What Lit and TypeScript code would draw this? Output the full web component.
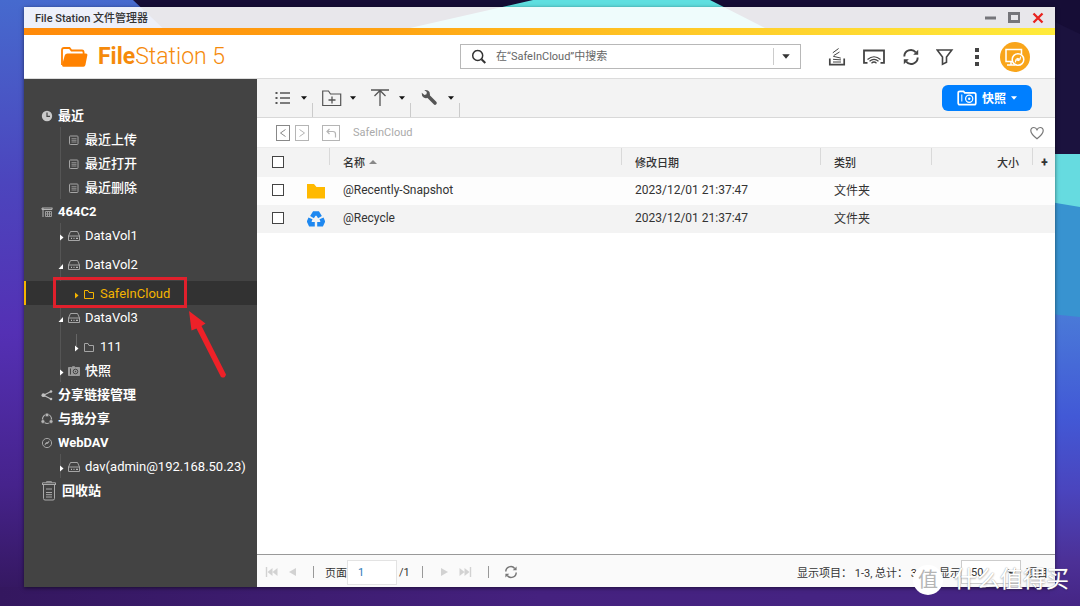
import { LitElement, html, svg, css } from "lit";
import { customElement, state } from "lit/decorators.js";
import { classMap } from "lit/directives/class-map.js";

const icon = (w: number, h: number, body: unknown) =>
  html`<svg class="ico" width=${w} height=${h} viewBox="0 0 ${w} ${h}" fill="none" stroke="currentColor" aria-hidden="true">${body}</svg>`;

const icons = {
  clock: () => icon(12, 12, svg`<circle cx="6" cy="6" r="5.2" fill="#c9c9c9" stroke="none"/><path d="M6 2.5V6.3H9" stroke="#434343" stroke-width="1.2"/>`),
  note: () => icon(12, 12, svg`<rect x="1.500" y="2" width="8.500" height="8.500" rx=".8" stroke="#a5a5a5"/><path d="M3.500 4.700h5M3.500 6.300h5M3.500 8h5" stroke="#a5a5a5" stroke-width=".8"/>`),
  nas: () => icon(12, 12, svg`<path d="M1 2h10.500M2 2v9M1 2v1.500h10V2" stroke="#b5b5b5"/><path d="M4.500 5.500h6v5h-6zM6.500 5.500v5M8.500 5.500v5M4.500 8h6" stroke="#9c9c9c"/>`),
  disk: () => icon(12, 12, svg`<path d="M.5 6L2.500 1.500h7l2 4.500v4.500H.5zM.5 6h11" stroke="#a5a5a5"/><path d="M3 8.300h1M5.500 8.300h1M8 8.300h2" stroke="#d5d5d5"/>`),
  folder: () => icon(12, 12, svg`<path d="M1.500 10.500v-8h3.500l1 2h4.500v6z" stroke="currentColor"/>`),
  camera: () => icon(12, 12, svg`<path d="M.5 2.500h3l1-.8h2l1 .8h4v8H.5z" fill="#9a9a9a" stroke="#9a9a9a"/><path d="M2.500 3.500v6" stroke="#444"/><circle cx="7.500" cy="6.500" r="2.300" stroke="#444"/><circle cx="7.500" cy="6.500" r=".7" fill="#444" stroke="none"/>`),
  share: () => icon(12, 12, svg`<path d="M10 2.500L2.500 6.200 10 10" stroke="#c0c0c0" stroke-width="1.100"/><g fill="#c0c0c0" stroke="none"><circle cx="10" cy="2.500" r="1.300"/><circle cx="2.400" cy="6.200" r="1.900"/><circle cx="10" cy="10" r="1.300"/></g>`),
  shared: () => icon(12, 12, svg`<circle cx="6" cy="6" r="4.500" stroke="#b5b5b5" stroke-width="1.200"/><g fill="#b5b5b5" stroke="#434343" stroke-width=".6"><circle cx="6" cy="1.900" r="1.900"/><circle cx="1.900" cy="8.500" r="1.900"/><circle cx="10.100" cy="8.500" r="1.900"/></g>`),
  dav: () => icon(12, 12, svg`<circle cx="6" cy="6" r="4.600" stroke="#a5a5a5"/><path d="M4 8.200l.6-2 1.400-.8M8 3.800l-.6 2-1.400.8M5 7l2-2" stroke="#a5a5a5"/>`),
  trash: () => icon(16, 20, svg`<path d="M1 3.500h14M1.500 3V1.800h13V3M5.500 1.500V.7h5v.8M2.500 4v13.500q0 1.500 1.500 1.500h8q1.500 0 1.500-1.500V4M5 8h6M5 11.500h6M5 13.700h6M5 16h6" stroke="#a9a9a9"/>`),
  logo: () => icon(28, 22, svg`<path d="M2 19V4q0-2 2-2h5.500l2 2.500H22q1.600 0 1.600 2V8" stroke="#ff8200" stroke-width="1.800"/><path d="M7.500 7.500H26q1.600 0 1.400 1.500l-2 10q-.3 1.700-2 1.700H3.500q-1.800 0-1.400-1.800l2.600-9.500q.6-1.900 2.800-1.900z" fill="#ff8200" stroke="none"/>`),
  search: () => icon(16, 16, svg`<circle cx="6.700" cy="6.500" r="5" stroke-width="1.500"/><path d="M10.500 10.300l3.800 3.700" stroke-width="2"/>`),
  tasks: () => icon(18, 20, svg`<path d="M1.800 11.500v6.200h14.400v-6.200" stroke-width="1.700"/><path d="M5 15h8M5 12.300l8 .6M5.200 9.300l7.600 1.800M5.800 8.500L11.500 5M4.800 5.800L10.600 1.500" stroke-width="1"/>`),
  cast: () => icon(24, 20, svg`<path d="M5.500 15.800H2V3.500h20v12.300h-3.500" stroke-width="1.800"/><path d="M5.500 12.500q6.500-5.500 13 0M7.500 14.300q4.500-4 9 0M9.500 16.200q2.500-2.400 5 0" stroke-width="1.200"/>`),
  refresh: () => icon(18, 18, svg`<path d="M2.300 8.500A6.500 6.500 0 0 1 13.800 4.400M15.700 9.500A6.500 6.500 0 0 1 4.200 13.600" stroke-width="1.900"/><path d="M16.200 1.800v5h-5zM1.800 16.200v-5h5z" fill="currentColor" stroke="none"/>`),
  filter: () => icon(18, 18, svg`<path d="M1.200 2h14.600L10.500 9v5.200L6.500 16.200V9z" stroke-width="1.600"/>`),
  more: () => icon(6, 20, svg`<path d="M1 1h4v4H1zM1 8h4v4H1zM1 15h4v4H1z" fill="currentColor" stroke="none"/>`),
  remote: () => icon(30, 30, svg`<circle cx="15" cy="15" r="15" fill="#f9a51a" stroke="none"/><path d="M13 19.500H6V7.500h15.500v5M7 23h8M11 20v3" stroke="#fff" stroke-width="1.500"/><circle cx="18" cy="17.500" r="5.800" fill="#f9a51a" stroke="#fff" stroke-width="1.500"/><path d="M15.300 20.300l.8-3 2-1M20.700 14.700l-.8 3-2 1M16.800 18.700l2.400-2.400" stroke="#fff" stroke-width="1.200"/>`),
  list: () => icon(20, 20, svg`<path d="M7 5h10M7 10h10M7 15h10" stroke-width="1.600"/><path d="M2.500 5h2M2.500 10h2M2.500 15h2" stroke-width="2"/>`),
  newFolder: () => icon(20, 20, svg`<path d="M.700 17.500V3H6.500l2 3H18.700v11.500z" stroke-width="1.200"/><path d="M10 8.500v7M6.500 12h7" stroke-width="1.300"/>`),
  upload: () => icon(20, 20, svg`<path d="M0 2h18M9 2.500v15.500M3.500 8L9 2.500 14.500 8" stroke-width="1.300"/>`),
  wrench: () => icon(20, 20, svg`<path d="M8.500 8.500l6.500 6.500" stroke-width="3.600" stroke-linecap="round"/><path d="M1.700 4.800L4.500 7l2-.8.300-2.200L4.300 2Q8 1.400 9.500 4q1.300 2.800-.8 5-2.300 2-5 .6Q1.500 8.200 1.700 4.800z" fill="currentColor" stroke="none"/>`),
  snapshot: () => icon(20, 16, svg`<path d="M1.200 13V3q0-1.700 1.700-1.700h3.600l1.200 1.500h9.400q1.700 0 1.700 1.700V13q0 1.700-1.700 1.700H2.900Q1.200 14.700 1.200 13z" stroke="#fff" stroke-width="1.700"/><path d="M4.800 4.500v7" stroke="#fff"/><circle cx="12.200" cy="8.700" r="3.600" stroke="#fff" stroke-width="1.200"/><circle cx="12.200" cy="8.700" r="1.200" fill="#fff" stroke="none"/>`),
  heart: () => icon(14, 14, svg`<path d="M7 12.700Q.8 7.900.8 4.700.8 1.500 3.900 1.500 6 1.500 7 3.700 8 1.500 10.100 1.500q3.100 0 3.100 3.200 0 3.200-6.200 8z" stroke-width="1.200"/>`),
  left: () => icon(14, 16, svg`<rect x=".5" y=".5" width="13" height="15"/><path d="M9.500 4.500L4.500 8l5 3.500"/>`),
  right: () => icon(14, 16, svg`<rect x=".5" y=".5" width="13" height="15"/><path d="M4.500 4.500L9.500 8l-5 3.500"/>`),
  up: () => icon(18, 16, svg`<rect x=".5" y=".5" width="17" height="15"/><path d="M13.500 12.500V9q0-2.500-2.500-2.500H5M7.500 4L5 6.500 7.500 9" stroke-width="1.200"/>`),
  folderFull: () => icon(18, 16, svg`<path d="M0 1h7l2.500 3H18v11.500H0z" fill="#ffb900" stroke="none"/>`),
  recycle: () => icon(18, 16, svg`<g stroke="#1e88f0" stroke-width="4.400"><path d="M5 6.200L7.300 2.500h3.400L13 6.200"/><path d="M14.500 7.300l1.300 3.200-1.300 2.800H10.200"/><path d="M7.800 13.300H3.500L2.200 10.500l1.300-3.200"/></g>`),
  caret: () => icon(6, 4, svg`<path d="M0 .2h6L3 3.800z" fill="currentColor" stroke="none"/>`),
  sort: () => icon(8, 4, svg`<path d="M0 4h8L4 0z" fill="#888" stroke="none"/>`),
  closed: () => icon(6, 12, svg`<path d="M2 4.500v6L5.500 7.500z" fill="currentColor" stroke="none"/>`),
  open: () => icon(6, 12, svg`<path d="M5 5v5H.5z" fill="currentColor" stroke="none"/>`),
  first: () => icon(14, 10, svg`<path d="M1.500 0v10" stroke-width="1.400"/><path d="M7.500 1v8L2.500 5zM12.500 1v8L7.500 5z" fill="currentColor" stroke="none"/>`),
  prev: () => icon(8, 10, svg`<path d="M7 1v8L0 5z" fill="currentColor" stroke="none"/>`),
  next: () => icon(8, 10, svg`<path d="M0 1v8l7-4z" fill="currentColor" stroke="none"/>`),
  last: () => icon(14, 10, svg`<path d="M11.500 0v10" stroke-width="1.400"/><path d="M5.500 1v8l5-4zM.5 1v8l5-4z" fill="currentColor" stroke="none"/>`),
  min: () => icon(12, 12, svg`<path d="M1 6h11" stroke="#75757a" stroke-width="3"/>`),
  max: () => icon(12, 12, svg`<rect x="1.500" y="1.500" width="10" height="8" stroke="#75757a" stroke-width="3"/>`),
  close: () => icon(12, 12, svg`<path d="M1.500 1.500l9 9M10.500 1.500l-9 9" stroke="#e8231f" stroke-width="2.300"/>`),
};
type IconName = keyof typeof icons;

interface TreeNode {
  label: string;
  icon: IconName;
  branch?: "open" | "closed";
  volume?: boolean;
  selected?: boolean;
  children?: TreeNode[];
}

const TREE: TreeNode[] = [
  { label: "最近", icon: "clock", children: [
    { label: "最近上传", icon: "note" },
    { label: "最近打开", icon: "note" },
    { label: "最近删除", icon: "note" },
  ] },
  { label: "464C2", icon: "nas", children: [
    { label: "DataVol1", icon: "disk", branch: "closed", volume: true },
    { label: "DataVol2", icon: "disk", branch: "open", volume: true, children: [
      { label: "SafeInCloud", icon: "folder", branch: "closed", selected: true },
    ] },
    { label: "DataVol3", icon: "disk", branch: "open", volume: true, children: [
      { label: "111", icon: "folder", branch: "closed" },
    ] },
    { label: "快照", icon: "camera", branch: "closed" },
  ] },
  { label: "分享链接管理", icon: "share" },
  { label: "与我分享", icon: "shared" },
  { label: "WebDAV", icon: "dav", children: [
    { label: "dav(admin@192.168.50.23)", icon: "disk", branch: "closed" },
  ] },
  { label: "回收站", icon: "trash" },
];

const FILES: { name: string; date: string; type: string; icon: IconName }[] = [
  { name: "@Recently-Snapshot", date: "2023/12/01 21:37:47", type: "文件夹", icon: "folderFull" },
  { name: "@Recycle", date: "2023/12/01 21:37:47", type: "文件夹", icon: "recycle" },
];

const reset = css`
  * { box-sizing: border-box; }
  button, input, select { font: inherit; color: inherit; margin: 0; padding: 0; border: 0; background: none; border-radius: 0; }
  button { display: inline-flex; align-items: center; }
  a { color: inherit; text-decoration: none; }
  .ico { display: block; flex: none; }
`;

@customElement("folder-tree")
class FolderTree extends LitElement {
  static styles = [reset, css`
    :host { display: block; width: 233px; flex: none; padding-top: 24px; background: #434343; color: #fff; font-size: 13px; }
    ul { list-style: none; margin: 0; padding: 0; }
    .branch { background: linear-gradient(#555, #555) 36px 0 / 1px 100% no-repeat; }
    .branch .branch { background-image: linear-gradient(#666, #666); background-position: 52px 0; background-size: 1px 12px; }
    .row { display: flex; align-items: center; height: 24px; position: relative; }
    .row.volume { margin-bottom: 5px; }
    .row.selected { background: #323232; color: #f5b400; box-shadow: inset 2px 0 #f5b400; }
    .d0 { padding-left: 17px; font-weight: 700; }
    .d1 { padding-left: 34px; }
    .d2 { padding-left: 49px; }
    .toggle { width: 6px; margin-right: 4px; padding-top: 2px; flex: none; }
    .link { display: flex; align-items: center; gap: 5px; white-space: nowrap; }
    .link .ico { margin-top: 2px; }
    .han { padding-bottom: 2px; }
    .d1 .han { font-weight: 500; }
    .d2:not(.selected) .link .ico { color: #a5a5a5; }
    .mark { position: absolute; left: 29px; top: -4px; width: 134px; height: 31px; border: 3px solid #e0202c; }
    .pointer { position: absolute; left: 160px; top: 26px; }
  `];

  private row(node: TreeNode, depth: number): unknown {
    const han = /[\u4e00-\u9fff]/.test(node.label);
    return html`<li>
      <div class=${classMap({ row: true, [`d${depth}`]: true, selected: !!node.selected, volume: !!node.volume })}>
        ${depth > 0 ? (node.branch
          ? html`<button class="toggle" aria-label=${node.label}>${icons[node.branch]()}</button>`
          : html`<span class="toggle"></span>`) : null}
        <a class="link" href="#">${icons[node.icon]()}<span class=${classMap({ han })}>${node.label}</span></a>
        ${node.selected ? html`<span class="mark"></span>
          <svg class="pointer" width="46" height="72" viewBox="0 0 46 72" aria-hidden="true">
            <path d="M5 4L21.500 16.500 17.500 19 42 67.500Q41 72 37 70L12.500 21.500 7.500 23.500z" fill="#ee2128"/>
          </svg>` : null}
      </div>
      ${node.children ? html`<ul class="branch">${node.children.map((c) => this.row(c, depth + 1))}</ul>` : null}
    </li>`;
  }

  render() {
    return html`<nav><ul>${TREE.map((n) => this.row(n, 0))}</ul></nav>`;
  }
}

@customElement("file-list")
class FileList extends LitElement {
  static styles = [reset, css`
    :host { display: block; flex: 1; }
    table { width: 100%; table-layout: fixed; border-collapse: collapse; font-size: 12px; }
    th, td { padding: 0 0 2px 14px; text-align: left; font-weight: 400; white-space: nowrap; }
    th { height: 29px; padding-bottom: 0; font-size: 11px; font-weight: 500; background: linear-gradient(#d9d9d9, #d9d9d9) 0 0 / 1px 17px no-repeat; }
    td { height: 28px; }
    thead { background: #f3f3f3; border-top: 1px solid #ececec; }
    tbody tr { background: #fdfdfd; }
    tbody tr:nth-child(even) { background: #f3f3f3; }
    .check { width: 50px; background: none; padding-left: 15px; }
    .kind { width: 22px; background: none; padding: 0; }
    .date { width: 199px; }
    .type { width: 111px; }
    .size { width: 101px; text-align: right; padding: 0 13px 0 0; }
    .add { width: 23px; padding: 0; }
    .add button { width: 100%; justify-content: center; font-size: 12px; font-weight: 900; padding-left: 2px; }
    .name button { gap: 4px; }
    .box { appearance: none; display: block; width: 12px; height: 12px; border: 1px solid #444; background: #fff; }
    .box:checked { background: #0a7cff; }
  `];

  render() {
    return html`<table>
      <thead><tr>
        <th class="check"><input class="box" type="checkbox" aria-label="全选"></th>
        <th class="kind"></th>
        <th class="name"><button>名称 ${icons.sort()}</button></th>
        <th class="date">修改日期</th>
        <th class="type">类别</th>
        <th class="size">大小</th>
        <th class="add"><button>+</button></th>
      </tr></thead>
      <tbody>${FILES.map((f) => html`<tr>
        <td class="check"><input class="box" type="checkbox" aria-label=${f.name}></td>
        <td class="kind">${icons[f.icon]()}</td>
        <td><a href="#">${f.name}</a></td>
        <td>${f.date}</td>
        <td>${f.type}</td>
        <td></td>
        <td></td>
      </tr>`)}</tbody>
    </table>`;
  }
}

@customElement("app-root")
class AppRoot extends LitElement {
  static styles = [reset, css`
    :host { display: flex; position: relative; min-height: 100vh; box-sizing: border-box; padding: 7px 25px 19px 24px; overflow: hidden; font-family: Roboto, "Noto Sans CJK SC", sans-serif; font-size: 11px; color: #333; }
    .desktop { position: absolute; inset: 0; width: 100%; height: 100%; }
    .window { position: relative; flex: 1; min-width: 0; display: flex; flex-direction: column; box-shadow: 0 1px 4px rgba(0, 0, 0, .55); }
    .title { display: flex; align-items: center; height: 21px; padding: 0 11px; background: rgba(255, 255, 255, .9); }
    .title h1 { flex: 1; margin: 0; padding-bottom: 2px; font-size: 11px; font-weight: 500; }
    .controls { display: flex; gap: 12px; }
    .stripe { height: 7px; background: linear-gradient(90deg, #ff8a0a, #ffa312 35%, #ffca28 65%, #ffeb3b); }
    .header { display: flex; align-items: center; height: 44px; padding: 0 25px 0 36px; background: #fff; border-bottom: 1px solid #dcdcdc; }
    .brand { display: flex; align-items: center; gap: 10px; margin-right: auto; color: #f58a0b; font-size: 23px; line-height: 28px; font-weight: 300; white-space: nowrap; }
    .brand b { font-weight: 700; }
    .search { display: flex; align-items: center; flex: 0 1 341px; height: 25px; margin-right: 27px; padding-left: 10px; border: 1px solid #b8b8b8; background: #fff; }
    .search label { color: #333; }
    .search input { flex: 1; min-width: 0; margin-left: 9px; outline: 0; }
    .search input::placeholder { color: #666; opacity: 1; }
    .search button { width: 27px; height: 17px; border-left: 1px solid #ccc; padding-left: 8px; color: #333; }
    .search button .ico { width: 8px; height: 5px; }
    .actions { display: flex; align-items: center; gap: 16px; color: #444; }
    .actions .dots { margin: 0 4px; }
    .body { flex: 1; display: flex; background: #fff; }
    .main { flex: 1; min-width: 0; display: flex; flex-direction: column; }
    .toolbar { display: flex; align-items: center; height: 39px; padding: 0 23px 0 16px; background: #f3f3f3; border-bottom: 1px solid #d8d8d8; color: #555; }
    .tool { gap: 8px; }
    .tool .ico + .ico { color: #111; }
    .divider { width: 1px; height: 14px; margin: 0 9px 0 5px; align-self: flex-end; background: #cbcbcb; }
    .near { margin-left: 15px; }
    .snap { margin-left: auto; width: 90px; height: 26px; justify-content: center; gap: 5px; border-radius: 6px; background: #007fff; color: #fff; font-size: 12px; font-weight: 700; }
    .snap span { padding-bottom: 2px; }
    .path { display: flex; align-items: center; height: 29px; padding: 0 11px 0 19px; color: #b5b5b5; }
    .path .back { color: #888; margin-right: 5px; }
    .path .parent { margin: 0 13px; }
    .path a { color: #aaa; }
    .fav { margin-left: auto; color: #777; }
    .pager { display: flex; align-items: center; height: 33px; padding: 2px 7px 0 8px; background: #fafafa; border-top: 1px solid #999; white-space: nowrap; }
    .faint { color: #d2d2d2; }
    .bar { width: 1px; height: 12px; background: #999; }
    .b1 { margin: 0 11px 0 16px; }
    .b2 { margin: 0 18px 0 12px; }
    .b3 { margin: 0 15px; }
    .gap { margin-left: 10px; }
    .page { width: 50px; height: 25px; margin-right: 2px; padding: 0 10px; border: 1px solid #e3e3e3; background: #fff; color: #2b7bb9; }
    .reload { color: #777; }
    .reload .ico { width: 14px; height: 14px; }
    .count { margin-left: auto; margin-right: 22px; }
    .size { width: 60px; height: 24px; margin-right: 5px; padding-left: 5px; border: 1px solid #ccc; background: #fff; }
    .credit { position: absolute; right: 11px; bottom: 10px; display: flex; align-items: center; gap: 11px; color: #fff; font-size: 23px; line-height: 32px; text-shadow: 0 0 1px #999, 0 1px 2px rgba(0, 0, 0, .25); white-space: nowrap; }
    .seal { display: flex; align-items: center; justify-content: center; width: 30px; height: 30px; border-radius: 50%; background: #fff; color: #b5b5b5; font-size: 20px; text-shadow: none; }
  `];

  @state() private query = "";

  private desktop() {
    return html`<svg class="desktop" viewBox="0 0 1080 606" preserveAspectRatio="none" aria-hidden="true">
      <defs>
        <linearGradient id="base" x1="0" y1="0" x2="0" y2="1">
          <stop offset="0" stop-color="#466ace"/><stop offset=".3" stop-color="#4c45bd"/><stop offset=".55" stop-color="#5430b4"/><stop offset=".8" stop-color="#46238c"/><stop offset="1" stop-color="#32165a"/>
        </linearGradient>
        <linearGradient id="floor" x1="0" y1="0" x2="1" y2="0">
          <stop offset="0" stop-color="#34175f"/><stop offset=".5" stop-color="#45217f"/><stop offset="1" stop-color="#452585"/>
        </linearGradient>
        <linearGradient id="side" x1="0" y1="0" x2="0" y2="1">
          <stop offset="0" stop-color="#4a7ad8"/><stop offset=".35" stop-color="#4259d6"/><stop offset=".6" stop-color="#4a45be"/><stop offset=".85" stop-color="#4c3096"/><stop offset="1" stop-color="#452585"/>
        </linearGradient>
      </defs>
      <rect width="1080" height="606" fill="url(#base)"/>
      <path d="M0 587H1080V606H0z" fill="url(#floor)"/>
      <path d="M133 0H1080V158H300z" fill="#160d36"/>
      <path d="M1055 22L1080 34V158H1055z" fill="#1b123e"/>
      <path d="M533 0H710L765 28H410z" fill="#5fdfe0"/>
      <path d="M1050 314H1080V606H1050z" fill="url(#side)"/>
      <path d="M1050 158H1080V317L1050 314z" fill="#3893d0"/>
      <path d="M1050 154H1080V207L1050 202z" fill="#66dbe0"/>
    </svg>`;
  }

  render() {
    return html`
      ${this.desktop()}
      <div class="window">
        <div class="title">
          <h1>File Station 文件管理器</h1>
          <div class="controls">
            <button aria-label="最小化">${icons.min()}</button>
            <button aria-label="最大化">${icons.max()}</button>
            <button aria-label="关闭">${icons.close()}</button>
          </div>
        </div>
        <div class="stripe"></div>
        <header class="header">
          <div class="brand">${icons.logo()}<span><b>File</b>Station 5</span></div>
          <div class="search">
            <label for="q" aria-label="搜索">${icons.search()}</label>
            <input id="q" type="text" placeholder="在“SafeInCloud”中搜索" .value=${this.query}
              @input=${(e: Event) => { this.query = (e.target as HTMLInputElement).value; }}>
            <button aria-label="搜索选项">${icons.caret()}</button>
          </div>
          <div class="actions">
            <button aria-label="任务">${icons.tasks()}</button>
            <button aria-label="投放">${icons.cast()}</button>
            <button aria-label="刷新">${icons.refresh()}</button>
            <button aria-label="筛选">${icons.filter()}</button>
            <button class="dots" aria-label="更多">${icons.more()}</button>
            <button aria-label="远程">${icons.remote()}</button>
          </div>
        </header>
        <div class="body">
          <folder-tree></folder-tree>
          <main class="main">
            <div class="toolbar">
              <button class="tool" aria-label="视图">${icons.list()}${icons.caret()}</button>
              <span class="divider"></span>
              <button class="tool" aria-label="新建文件夹">${icons.newFolder()}${icons.caret()}</button>
              <button class="tool near" aria-label="上传">${icons.upload()}${icons.caret()}</button>
              <span class="divider"></span>
              <button class="tool" aria-label="工具">${icons.wrench()}${icons.caret()}</button>
              <span class="divider"></span>
              <button class="snap">${icons.snapshot()}<span>快照</span>${icons.caret()}</button>
            </div>
            <div class="path">
              <button class="back" aria-label="后退">${icons.left()}</button>
              <button aria-label="前进">${icons.right()}</button>
              <button class="parent" aria-label="上一级">${icons.up()}</button>
              <a href="#">SafeInCloud</a>
              <button class="fav" aria-label="收藏">${icons.heart()}</button>
            </div>
            <file-list></file-list>
            <footer class="pager">
              <button class="faint" aria-label="首页">${icons.first()}</button>
              <button class="faint gap" aria-label="上一页">${icons.prev()}</button>
              <span class="bar b1"></span>
              <label for="page">页面</label>
              <input id="page" class="page" type="text" value="1">
              <span>/1</span>
              <span class="bar b2"></span>
              <button class="faint" aria-label="下一页">${icons.next()}</button>
              <button class="faint gap" aria-label="末页">${icons.last()}</button>
              <span class="bar b3"></span>
              <button class="reload" aria-label="刷新">${icons.refresh()}</button>
              <span class="count">显示项目： 1-3, 总计： 3</span>
              <label for="size">显示</label>
              <select id="size" class="size"><option>50</option></select>
              <span>项目</span>
            </footer>
          </main>
        </div>
      </div>
      <div class="credit"><span class="seal">值</span><span>什么值得买</span></div>
    `;
  }
}
